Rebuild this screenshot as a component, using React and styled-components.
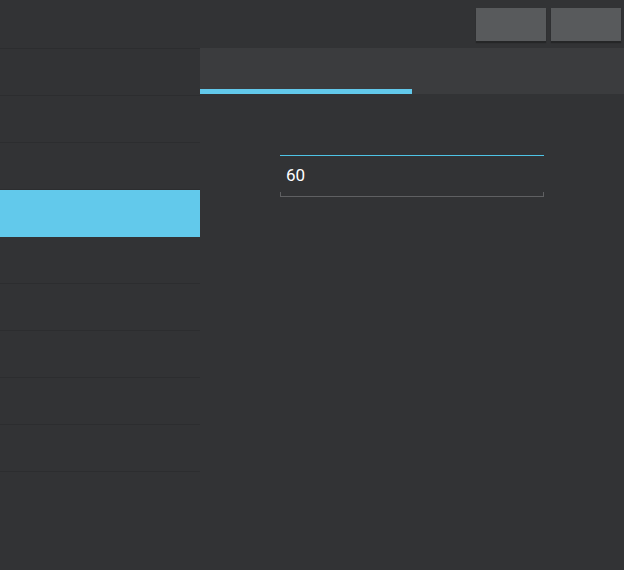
import styled, { createGlobalStyle } from 'styled-components';

const GlobalStyle = createGlobalStyle`
  html, body {
    margin: 0;
    padding: 0;
    background: #323335;
  }
  #root {
    min-height: 570px;
  }
`;

const Page = styled.div`
  width: 624px;
  height: 570px;
  background: #323335;
  display: flex;
  flex-direction: column;
  font-family: Roboto, "Noto Sans", sans-serif;
  overflow: hidden;
`;

const Header = styled.div`
  height: 48px;
  display: flex;
  justify-content: flex-end;
  align-items: flex-start;
  gap: 5px;
  padding: 8px 3px 0 0;
  box-sizing: border-box;
`;

const HeaderButton = styled.button`
  width: 70px;
  height: 33px;
  border: none;
  border-radius: 0;
  background: #585a5c;
  box-shadow: 0 2px 1px rgba(0, 0, 0, 0.25);
  padding: 0;
`;

const Body = styled.div`
  flex: 1;
  display: flex;
`;

const Sidebar = styled.div`
  width: 200px;
  display: flex;
  flex-direction: column;
  border-top: 1px solid #2c2d2f;
`;

const Row = styled.div`
  height: 46px;
  border-bottom: 1px solid ${(p) => (p.$active ? '#62c9eb' : '#2c2d2f')};
  background: ${(p) => (p.$active ? '#62c9eb' : 'transparent')};
`;

const Main = styled.div`
  flex: 1;
  display: flex;
  flex-direction: column;
`;

const TabBar = styled.div`
  height: 46px;
  background: #3b3c3e;
  display: flex;
`;

const Tab = styled.div`
  width: 212px;
  box-sizing: border-box;
  border-bottom: 5px solid ${(p) => (p.$active ? '#62c9eb' : 'transparent')};
`;

const Content = styled.div`
  padding: 61px 0 0 80px;
`;

const Field = styled.div`
  width: 264px;
  height: 42px;
  position: relative;
  box-sizing: border-box;
`;

const FocusLine = styled.div`
  height: 1px;
  background: #4ec4e6;
`;

const Value = styled.div`
  color: #ffffff;
  font-size: 17px;
  line-height: 20px;
  padding: 9px 0 0 6px;
`;

const Underline = styled.div`
  position: absolute;
  left: 0;
  right: 0;
  bottom: 0;
  height: 4px;
  border: 1px solid #5f6062;
  border-top: none;
`;

const listRows = Array.from({ length: 9 }, (_, i) => i === 3);

export default function App() {
  return (
    <Page>
      <GlobalStyle />
      <Header>
        <HeaderButton />
        <HeaderButton />
      </Header>
      <Body>
        <Sidebar>
          {listRows.map((active, i) => (
            <Row key={i} $active={active} />
          ))}
        </Sidebar>
        <Main>
          <TabBar>
            <Tab $active />
            <Tab />
          </TabBar>
          <Content>
            <Field>
              <FocusLine />
              <Value>60</Value>
              <Underline />
            </Field>
          </Content>
        </Main>
      </Body>
    </Page>
  );
}
